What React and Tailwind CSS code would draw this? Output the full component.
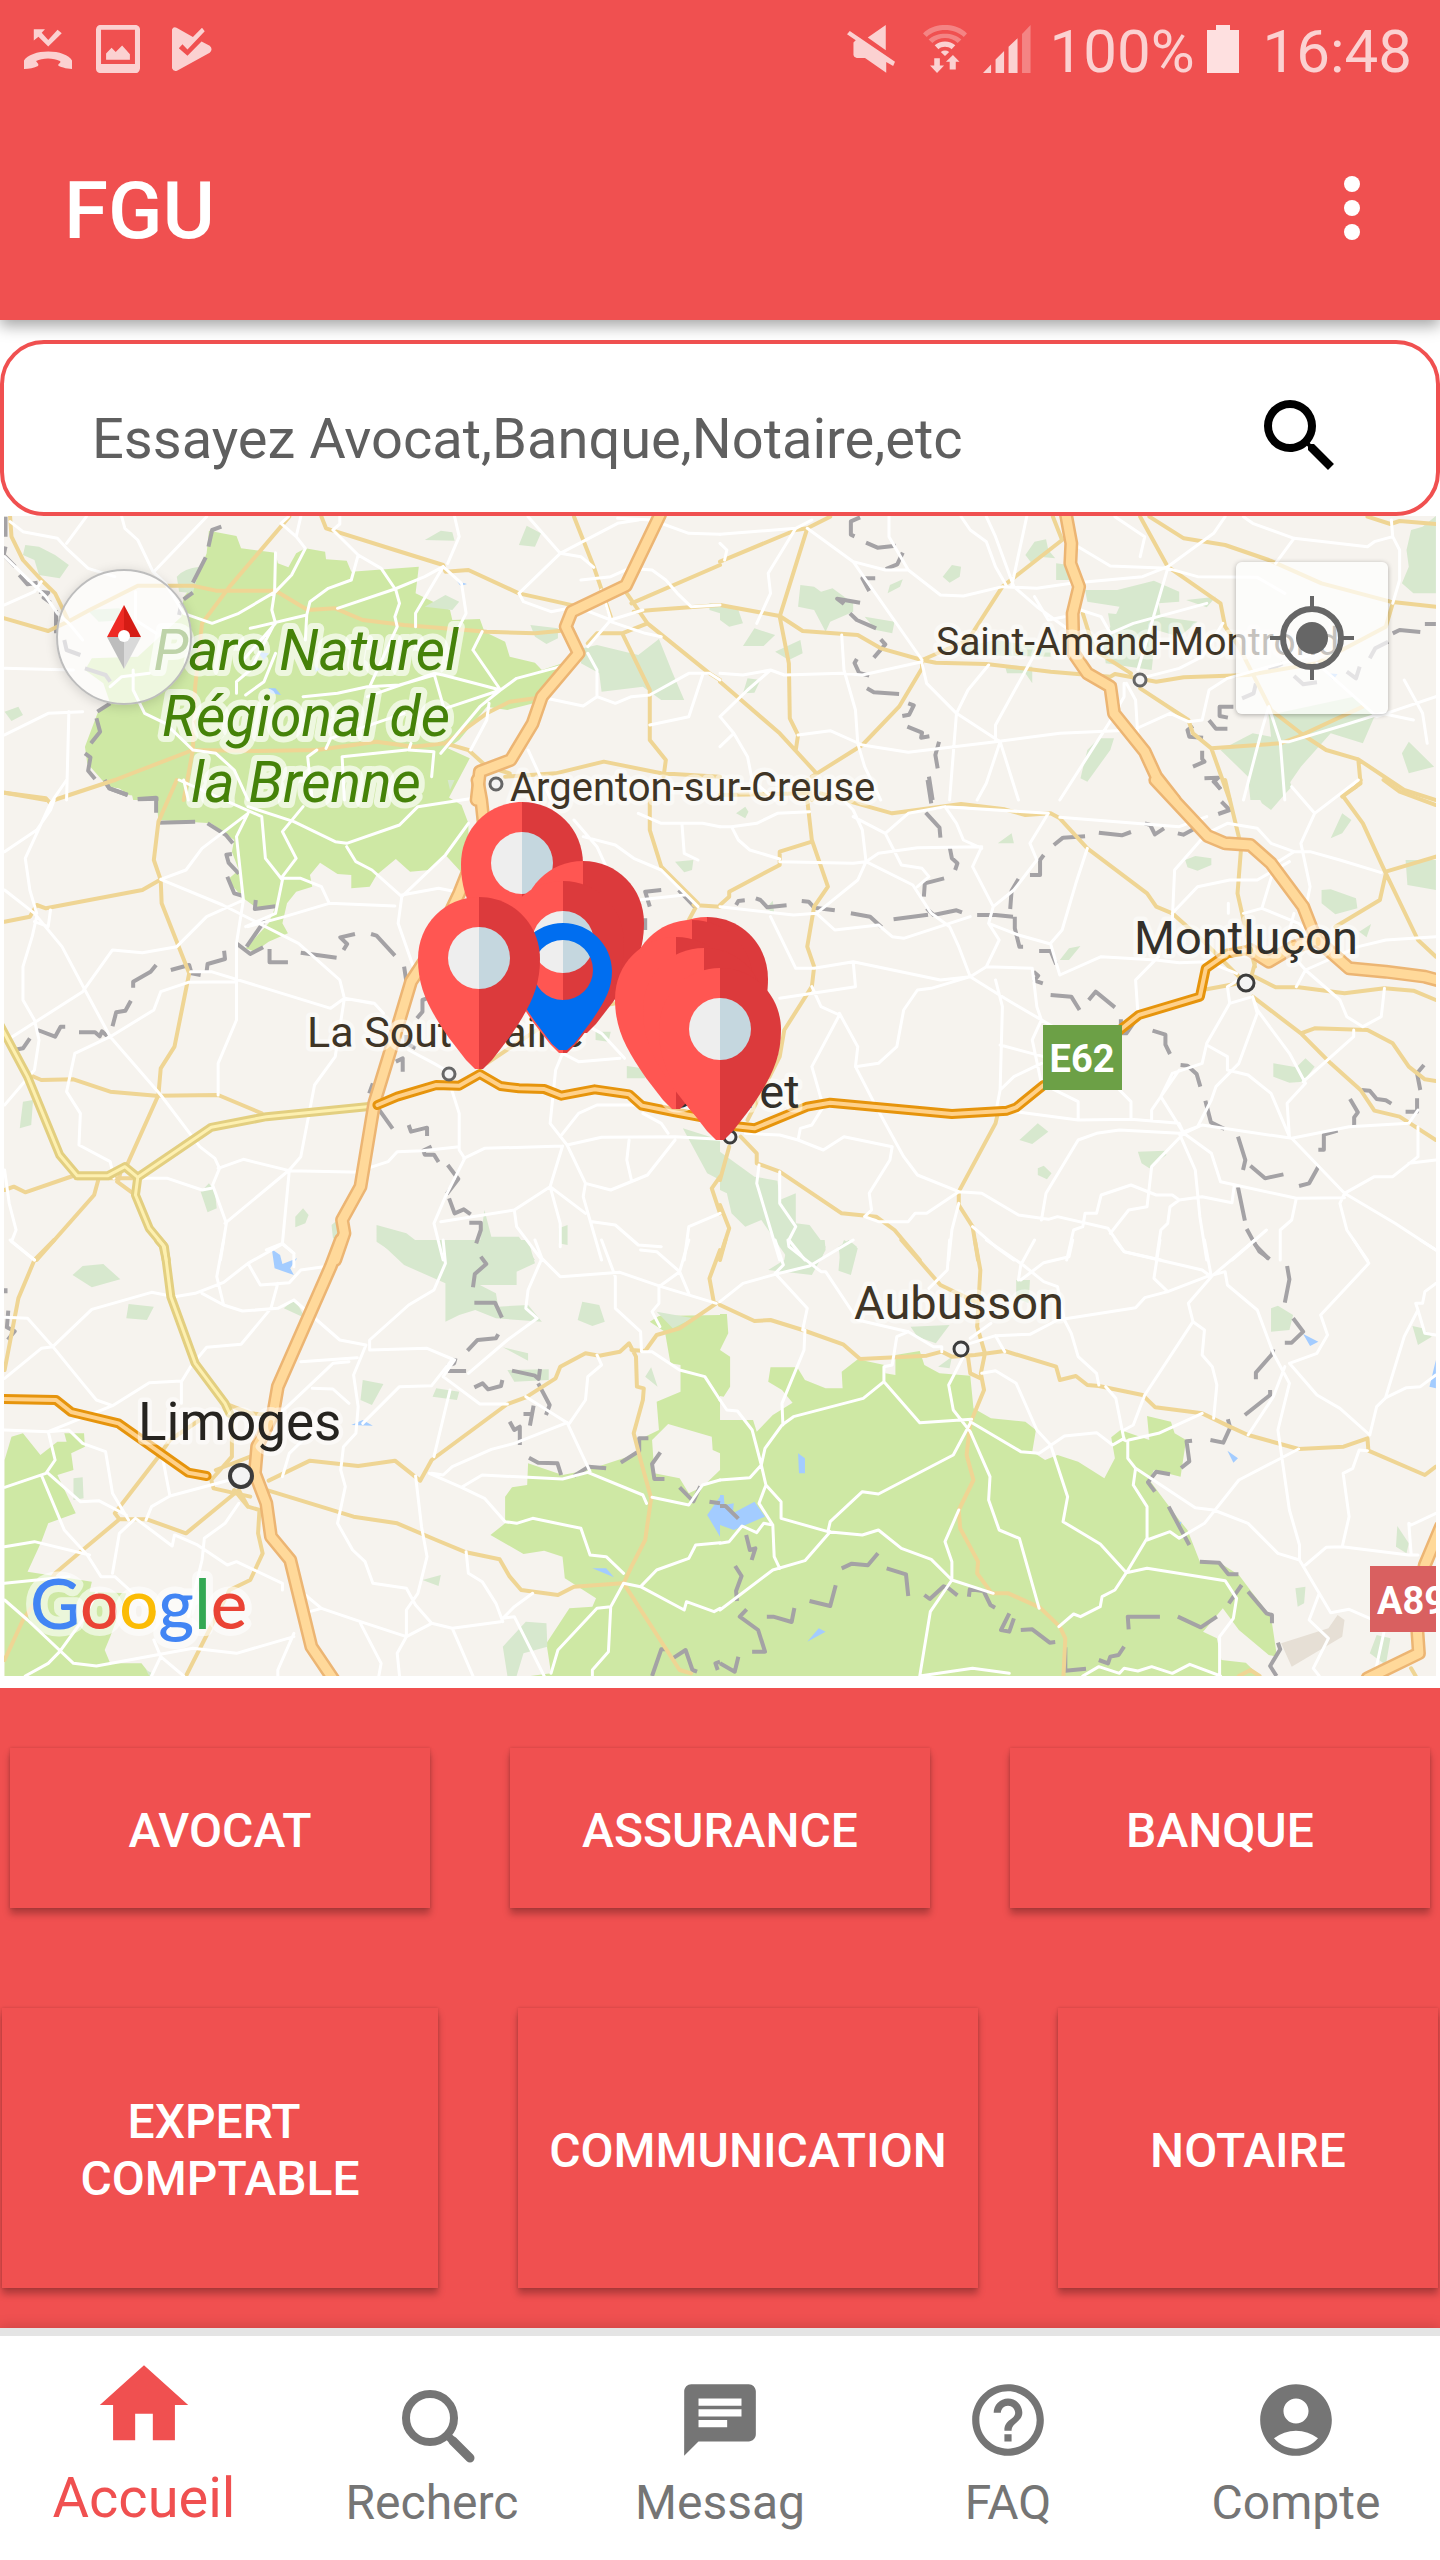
import React from "react";
import { MdHome, MdSearch, MdChat, MdHelpOutline, MdAccountCircle } from "react-icons/md";

/* ---------- Map data: six tiles, each drawn in its own local units ---------- */

const TILES = [
  {
    x: 0,
    y: 320,
    park: "M455 632 515 648 525 685 600 698 605 730 628 742 645 700 665 685 708 695 710 718 755 722 765 755 912 740 905 820 980 870 985 900 1045 897 1055 935 1100 965 1110 1010 1165 1028 1180 1050 1225 1030 1190 1140 1105 1170 1060 1160 1000 1260 975 1285 1023 1315 975 1440 290 1440 285 1410 235 1400 190 1330 185 1280 215 1170 240 1150 225 1090 185 1050 200 1015 300 1010 395 890 400 830 425 790 450 700Z",
    wood: "M55 675l30 5 35 25 30 30-20 40-45-10-10-45-25-15ZM925 660l35-28 25 5 5 25ZM1130 675 1147 617 1178 640 1165 680ZM925 860 970 825 1000 845 985 870ZM385 770Q400 745 435 740L420 820 390 815ZM1155 915 1215 925 1215 955 1190 972 1165 950ZM1270 985 1300 975 1390 1005 1435 957 1465 1060 1490 1140 1440 1140 1400 1100 1310 1115 1305 1060 1265 1030ZM10 1175 40 1160 50 1185 25 1203ZM1545 850 1568 855 1568 880 1545 870ZM190 870 260 865 275 900 215 905Z",
    water: "M995 783 1017 792 1003 798ZM560 995 585 1000 575 1020ZM685 1035 697 1048 687 1055ZM585 1105 600 1105 612 1125 590 1120Z",
    white: "M22 605 50 635 125 655 145 685 192 745 250 770M145 670 188 590M265 590 272 625 300 660 333 755 360 790 400 880 462 910 520 880 600 815 635 765 665 685 645 650 655 590M450 590 335 755M10 710 100 830 125 880 150 910 180 960M10 855 75 815 90 785M295 815 295 900 340 940M600 698 598 815 592 870 600 910 530 1020M645 650 612 610 628 590M740 590 740 612 725 630 780 705 830 745 862 810 870 850 860 890 865 920 805 1100M780 705 765 780 715 805 675 845 668 885 545 925M735 865 860 807 925 770 965 740M668 885 665 960M965 740 1005 790 1015 880 1000 920M965 740 905 880 905 920M990 590 1000 650 975 730M1150 590 1220 700 1265 710 1293 742M1220 700 1345 610 1390 600M1220 700 1130 820 1140 845 1200 875 1255 860M1345 595 1420 600 1500 640 1568 643M1265 780 1330 770 1370 745 1420 750 1450 780 1475 820 1505 860 1568 855M1255 860 1330 900 1400 870M1330 900 1280 980M1330 905 1405 940 1440 950M1330 900 1310 810M1030 990 1050 935M1030 990 1090 1110 1045 1160 960 1300M1090 1110 1125 1075 1220 1040M1090 1110 965 1065 945 1060 800 1130M945 1060 970 1180M970 1165 1090 1110M10 1045 160 1050M10 1245 105 1180 180 1175M150 1175 145 1440M290 1050 290 1110 315 1180 360 1210 420 1290M240 1100 265 1070 325 1060M515 1120 515 1085 545 1050 600 905M535 1125 575 1085 600 1000M660 1130 735 1120 800 1100 870 1095 945 1065M420 1290 470 1300 510 1350 540 1440M890 1290 945 1295 940 1370M890 1290 895 1270M1025 1290 1060 1200 1065 1150M400 1380 410 1440M710 1285 720 1255 880 1180M1280 1000 1300 1050 1300 1130 1340 1150 1375 1130 1415 1125M1190 1135 1270 1158 1300 1130M1415 1125 1500 1060 1545 1060 1568 1080M1530 1065 1500 1190 1415 1215M1150 1290 1200 1440M680 1440 670 1310 690 1290M750 1440 745 1310 885 1290",
    yellow: "M22 590 25 650 50 720 90 780 120 820 150 905M10 895 105 933 148 905 195 870 300 797 420 797 470 812 600 812 670 870 730 865 790 900 880 915 1060 935 1165 940 1240 930M630 590 500 800 440 910 425 1100 420 1290 400 1440M700 590 710 625 860 690 965 735 970 755 1020 750 1130 820 1260 860M1250 590 1293 740 1330 890M1365 820 1410 910 1545 1060 1568 1080M1375 850 1568 735M1380 875 1420 870 1568 855M1280 970 1300 940 1355 940 1410 910M1355 940 1415 1110 1415 1260 1450 1320 1445 1370M10 1418 100 1440M250 1380 420 1290 560 1293 690 1290 820 1265 900 1280 970 1270 1060 1180 1110 1145 1165 1135M970 1270 1020 1290 1060 1340 1110 1360M1100 1370 1210 1360 1315 1325 1440 1360 1568 1370",
    border: "M12 590V650M12 680l-4 25 25 35M42 765l18 28 22-5M85 815l20 3-10 15 15 15M122 870v70M482 620l-20 10-8 50M448 712 420 788M420 818l-20 20M395 850l-5 35M140 960l5 30 30 15M185 1045l45 20 10 20M240 1150l-28 25M210 1195l8 40-20 35M185 1300l12 12-5 40 15 25M228 1385l10 20 40 20M300 1438l45-2",
    motorway: "M1437 585 1363 797 1245 875 1232 920 1260 1000 1180 1130 1160 1210 1112 1320 1045 1355 1038 1440",
  },
  {
    x: 720,
    y: 320,
    wood: "M665 705 685 665 710 658 715 690 730 715 695 710 680 732ZM485 770 505 735 525 740 522 770 500 788ZM732 730 760 735 760 780 732 780ZM795 810 865 810 945 782 1000 815 1000 845 955 850 960 890 1040 905 1000 950 950 930 940 1050 840 1030 835 980 850 920 870 860 800 845ZM845 880 885 885 885 925 850 920ZM1015 840 1080 830 1060 862ZM175 795 205 800 220 815 245 805 290 850 290 875 240 905 230 935 205 870 170 860ZM365 820 370 795 398 778 392 800ZM315 890 380 905 375 940 340 930ZM75 925 120 945 95 978 50 978ZM120 995 175 960 180 1000 150 1020ZM0 858 40 870 50 910 20 920 0 900ZM50 1120 60 1075 88 1080 75 1118ZM520 985 600 960 720 985 720 1010 520 1005ZM620 1035 680 1040 680 1090 665 1060 625 1060ZM1505 630 1530 620 1559 588 1559 820 1510 820 1485 790 1500 740 1495 690ZM1195 1185 1380 1130 1425 1190 1400 1270 1330 1240 1265 1340 1215 1440 1155 1440 1150 1370 1090 1290 1160 1240 1200 1250ZM800 1290 825 1255 858 1255 850 1290 800 1385 785 1375ZM1485 1300 1500 1265 1555 1340 1500 1360Z",
    water: "M1320 1060 1345 1062 1335 1080Z",
    white: "M0 643 165 625 200 600M10 720 15 690 0 670M165 625 105 760 110 820 80 910M190 625 290 725 360 750 410 750 480 825 530 828 615 800M290 725 440 1020M368 590 368 650 410 750M525 590 545 630 580 665 600 740 625 800M580 590 600 650 640 800M668 590 635 800M615 800 690 805 765 790 920 770 975 740 1075 640 1100 590M780 680 850 738 975 745M975 745 910 1050M860 590 925 650 915 710M975 745 1040 770 1170 772 1230 820M1140 590 1160 610 1250 655 1410 680 1425 665 1465 650 1462 600M1250 655 1210 730M1465 650 1480 690 1480 780 1465 850M685 830 715 900 750 890M640 800 690 860 770 940M785 870 830 890 850 940 900 910 1060 850M0 1060 50 1065 110 1050 140 1065 265 1060 310 1065 440 1025M265 945 270 1050 295 1170 300 1270 315 1340 350 1440M0 1190 60 1110 110 1050M0 1190 30 1240 0 1280M30 1240 60 1310 70 1380 120 1440M170 1245 240 1232 310 1275 410 1297 600 1265 740 1240 900 1230 980 1180 1020 1205 1050 1200M440 1030 450 1090 515 1180 610 1265 650 1440M515 1180 540 1110 585 1035M515 1180 500 1440M600 1265 600 1215 690 990M610 1265 580 1390 560 1440M885 1090 905 1140 910 1250M740 1440 870 1160M880 1090 880 1130 855 1190M1050 1200 1065 1110 1105 1075 1300 1000M915 1075 1000 1045 1050 1010 1095 910M1195 1160 1180 1230 1140 1440M1195 1160 1220 1265 1230 1440M1220 1265 1240 1265 1360 1215 1440 1180 1510 1200M1300 1030 1430 1190 1559 1130M1490 1080 1530 1180 1540 1270",
    yellow: "M0 725 165 630 190 625 240 590M190 625 130 890 150 1030 152 1195 170 1245 165 1290M0 855 130 888 180 933 300 945 350 985 440 1020 470 1028 580 1032 720 1055 850 1070 860 1062 950 1085 1010 1072 1150 1065 1300 1030 1450 920 1465 850M725 590 745 660 615 800 540 960 440 1020 440 1045 390 1160 310 1275 200 1370M0 1085 130 1240 210 1360M790 880 815 990 895 1060M915 1105 1020 1200 1030 1240 1070 1285 1110 1440M1070 1285 1220 1270 1260 1250 1290 1230 1400 1160M915 590 975 740 1090 850 1100 920 1130 980 1200 1170 1270 1245 1320 1290 1390 1318 1395 1390 1355 1430M1390 1318 1490 1410 1559 1440M935 590 1010 655 1100 675 1195 720 1310 790 1460 845 1559 860M1410 590 1460 612 1480 603 1559 612",
    border: "M305 592l-20 12 0 40 8 5M318 668l25 15 40-6M398 698l-12 35-25 14M338 775h-28l15 38M305 848l-50-12 15 16M283 880l15 20 42 25M350 958l10 15-25 40M298 1017l-5 12 10 30 22 8M320 1105l15 12 55 5M410 1150l12 6-10 28-15 4M408 1220l32 18-2 15 18-4M477 1265l-8 40 5 40M455 1370l8 70M1137 1135l25-15 5-30M1118 1160h-30v28l18 5M1105 1226l-25 0-15-25M1030 1218l-12 12 4 20 30 3M1050 1292v25l5 8-25 15M1055 1375l30-2-10 12 15 22M1465 940l15-10 45 6M1535 912h24M1455 965l-28 20-12 30M1250 1068l20 25 30-6M1365 1055l20 20 8-35M1195 1050l30-20",
    motorway: "M754 588 765 670 763 730 782 800 768 880 770 1000 800 1060 850 1100 858 1180 925 1295 950 1370 990 1440",
  },
  {
    x: 0,
    y: 780,
    park: "M235 0 975 0 975 50 1005 75 1020 130 1020 300 970 225 935 270 893 275 862 237 820 285 805 320 765 325 765 285 735 282 697 248 675 285 680 320 645 335 625 370 615 430 627 460 585 485 555 515 535 505 585 430 600 380 560 385 530 355 495 300 520 270 505 215 510 180 460 130 345 120 340 55 280 45Z",
    wood: "M50 965 72 960 68 1035 43 1045ZM437 1235 455 1210 468 1235 472 1285 452 1297ZM643 1310 660 1285 672 1305 665 1330 643 1342ZM820 1335 885 1360 960 1440 880 1440 820 1385ZM965 1380 1045 1388 1055 1290 1070 1370 1130 1370 1165 1440 985 1440ZM1217 1345 1236 1335 1236 1395 1217 1390ZM1297 755 1330 755 1325 785 1297 780ZM1365 858 1400 865 1405 895 1365 895ZM1487 1045 1568 1080 1568 1200 1540 1180ZM1470 245 1510 240 1507 270 1490 277ZM722 1335 735 1320 740 1380 725 1375ZM975 0 990 0 980 30Z",
    white: "M10 215 80 150 110 90 118 60M145 0 110 70 55 235 65 330 80 400M10 330 75 400 135 500 185 630 240 770 350 945 435 1100 468 1135 478 1165 463 1215 493 1330 480 1440M80 410 70 470 50 560 50 660 75 720 85 780 75 870 10 975M110 390 105 440 75 425M10 785 180 635 245 510 310 518 385 500 450 410 530 360M350 298 485 375 650 490 740 600 750 655 815 670 835 700M350 298 405 270 440 205 540 100M390 0 570 110 578 235 615 300 600 400 535 440M540 100 515 170 530 360 515 490 515 720 475 850 475 945M540 80 640 125 730 185 755 190 870 135 910 80 1030 55M660 80 615 155 645 235 612 295 655 295 700 320 717 370 860 378M755 200 775 245 810 270 875 350 867 430 900 560M875 345 955 325 1010 340M1020 130 970 225 875 350M540 440 620 410 717 370M415 575 460 575 720 685 750 655 810 670M240 770 335 690 350 635 410 607 515 605M163 820 240 770M163 820 145 935 175 1000 172 1095 240 1145 248 1195M750 655 730 830 685 915 655 1130 630 1170 490 1330M475 1165 530 1138 630 1172 790 1177M630 1172 615 1390M305 1195 365 1195 440 1230 460 1225M10 1170 20 1270 35 1350 25 1385 75 1440M800 1165 845 1145 865 1115 920 1112 1000 1100M890 810 945 850 970 870 1000 1000 1000 1110 1012 1135 970 1250 945 1330 965 1440M1010 1135 1055 1105 1225 1098M1225 820 1210 870 1198 1030 1235 1095 1275 1210 1270 1250 1310 1440M1220 1070 1260 1000 1300 975 1400 975M1235 1095 1310 1072 1470 1070 1568 1078M1275 1210 1330 1230 1410 1185 1470 1080M1225 1098 1198 1220 1120 1290 960 1325M1198 1220 1275 1300M1120 1290 1125 1340 1180 1440M1198 1220 1220 1330 1220 1400M1290 1325 1340 1335 1390 1395 1440 1400M1400 1000 1440 1030 1455 1060M1370 1080 1365 1140 1375 1200M1568 1300 1500 1340 1490 1440M580 1410 615 1390 640 1420M1225 820 1260 845 1350 835M1270 730 1310 760 1360 835M1250 120 1300 200 1320 260M1270 170 1340 195 1380 235 1440 270 1520 380M1390 100 1440 130 1530 130 1568 140M1485 130 1490 220 1520 240M1390 360 1490 345",
    yellow: "M10 38 100 55 110 70 118 60 250 0M385 0 345 125 335 240 350 300 352 370 412 580 380 800 350 865 345 945 275 1160M10 425 65 410 80 375 100 385 310 330 348 300M65 885 90 900 160 898 240 935 340 947 475 945 570 1000M10 1230 30 1220 55 1237 165 1185M215 1195 205 1245 80 1440M255 1205 290 1240M262 1180 258 1200M1415 60 1415 150 1440 260 1520 370 1500 420M1510 375 1568 380M1060 850 1180 740 1230 700 1340 670M1568 1190 1550 1225 1568 1300M165 1195 300 1195",
    trunk: "M0 735 60 890 130 1125 168 1187 235 1187 272 1160 300 1192 460 1042 580 1010 815 978M300 1192 295 1245 325 1345 355 1395 362 1440",
    border: "M228 0l10 25 40 20M300 57l40-4v45M345 128l80-3M452 130l40 35 15 25M505 222l-12 2 5 25 22 32M495 290l15 50 20 8M557 360l-2 27 45-8M577 420l-40 80M515 490l30 32 28-20M587 507v40h40M655 518l78 15M773 462l-32 10 15 20-8 18M808 462l12 5 40 60M880 560l5 45M488 512l2 25-38 15-2 22M340 555l-12 20-38 30v18M372 570l40-15 5 25 20 5M285 662l-12 30-20 5-8 42M82 750l38 20 12-30h10M172 757l35 0 10 12 5-15 12 15M65 775l-15 30-20 5M930 655l-10 5v35l-12 20M885 765l0 25 20 15M862 845l15-10 0 40M812 910l-8 30M825 988l30 58M890 1035l5 20 35-12v25M940 1100l-18 12 3 12 20 0 10 22M975 1155l23 42-25 45M978 1255l12 45 20-12 15 15M1022 1328l25 0 0 22-10 40M1440 330l-35 5 10 45M1478 330l38 55M1405 415v35",
    motorway: "M1040 0 1048 60 1055 150 1000 340 945 500 895 605 855 790 815 970 785 1220 745 1320 750 1360 730 1440",
    orange: "M822 975 865 950 950 915 1000 917 1045 882 1090 918 1130 925 1185 927 1222 947 1295 928 1370 943 1398 977 1470 997 1568 1022",
  },
  {
    x: 720,
    y: 780,
    wood: "M35 100 55 80 62 95 55 115ZM605 190 635 160 640 190ZM1155 0 1240 0 1245 20 1225 50 1200 90 1180 70ZM1330 175 1355 100 1375 120 1355 160ZM1013 240 1035 228 1070 235 1070 255 1040 272 1018 262ZM1493 240 1559 240 1559 330 1497 315ZM1310 330 1330 328 1385 355 1388 385 1340 403 1310 370ZM740 540 760 505 785 498 760 540ZM1392 455 1418 432 1408 472ZM1205 850 1255 862 1275 835 1295 860 1270 905 1240 908 1205 890ZM652 1080 692 1030 715 1055 680 1092ZM910 1115 970 1112 972 1125 935 1165 918 1150ZM692 1165 705 1157 722 1180 712 1198 692 1185ZM0 1115 75 1190 125 1202 130 1260 165 1240 165 1330 195 1335 230 1400 220 1440 150 1440 130 1400 90 1320 55 1340 25 1300 15 1240 0 1230ZM258 1400 280 1380 298 1400 292 1440 262 1440ZM100 385 115 362 118 400Z",
    white: "M0 140 25 140 40 180 65 210 130 237M25 140 80 130 125 100 195 95M240 20 290 90 310 150 318 245M290 110 360 160 410 100 490 80 715 100M360 160 395 255 440 265 455 290 430 320M318 245 345 220 430 203 570 200 550 260 595 380 585 430 608 480 580 560 545 590M130 245 290 250 318 245 420 315 460 400 500 440 520 500 545 590M318 245 300 300 210 400 160 405 0 380M490 80 515 130 530 180 570 205M715 100 675 190 690 240 640 330 595 380M740 112 1000 140 1060 110M800 205 775 310 745 450 720 490M585 430 650 465 720 492 740 585M545 590 620 655 725 740M210 400 250 450 345 435 375 470 400 475 545 410M110 410 165 565 205 565 290 545 480 600 545 590M545 590 460 625 430 630 400 690 385 800 345 850 295 860M290 545 295 620 130 655M260 700 300 800 295 860 340 980 400 1130 430 1185 520 1235 570 1240 650 1305 715 1318 735 1310 845 1345 880 1415 960 1440M200 620 220 680 260 705 200 860 225 980M600 600 615 680 610 930 600 1000M610 795 705 830M580 560 680 565 690 680 700 720 680 780 700 910M740 585 830 530 950 540 1000 548 1060 545 1125 580M985 420 990 270 1060 160 1105 130 1170 145 1200 190 1250 215 1285 215 1350 240 1440 278M985 400 1040 320 1110 300 1170 300 1240 245M1245 20 1295 100 1265 190 1285 320 1275 390M1295 100 1390 0M1140 400 1180 385 1210 250 1250 215M1180 385 1260 430 1300 480M1107 370 1107 400M1275 570 1390 500 1450 480 1559 470M1275 570 1230 500 1250 400M1255 620 1275 570 1350 660 1365 710 1400 740 1440 710 1447 625M1140 590 1105 620 1110 670 1060 790M1060 795 1105 830 1105 870 1150 885 1200 940 1240 1070M1160 650 1110 670 1060 790 1050 850 985 880 960 950 1010 1060M1160 650 1170 690 1240 820 1275 910 1235 970 1240 1070M1160 650 1170 700 1130 850 1080 920 1070 960 1040 1040 1000 1060M910 700 905 600 955 530M1380 750 1380 770 1270 905M645 995 780 1020 895 1018 1000 1030 1010 1060 1050 1035 1245 1075 1370 1040 1500 1030 1520 990M610 930 640 890 700 850M700 910 780 965 780 1020M870 930 895 965 895 1018M940 1020 940 990 1000 870M1010 1060 940 1160 930 1280 890 1290 850 1360M1000 1060 870 1050 820 1060 780 1080 710 1240 700 1320M1000 1060 1035 1170 1045 1310 1060 1440M1010 1060 1070 1120 1090 1205 1255 1255 1360 1253M1245 1075 1360 1240 1425 1190 1465 1190 1520 1130 1520 1040M1500 1150 1559 1140M1360 1240 1350 1270 1365 1350 1410 1440M1360 1240 1470 1330 1559 1410M1255 1255 1245 1320 1220 1350 1220 1440M1050 1250 1115 1268 1120 1215M1115 1440 1190 1350M55 1060 130 1065 170 1080 225 1110 270 1070 375 1100 370 1140 325 1240 330 1290 315 1310 345 1325 410 1325 425 1300 450 1300 520 1235M170 1080 175 1045 200 1035 225 980M520 1270 505 1350 498 1440M550 1340 600 1400 640 1440M85 1155 80 1210 130 1440M130 1175 130 1270 165 1340 150 1380 185 1440M790 1340 770 1350 755 1440M790 1340 795 1300 820 1300 830 1245 895 1215 950 1245 985 1245 1000 1260 1050 1250M1000 1260 980 1280 975 1330 960 1350 950 1440",
    yellow: "M190 60 200 180 235 320 205 380 190 500 205 560 200 620 140 750 130 830 60 1020M0 375 20 350 20 335 130 255 130 215 200 185M0 45 190 40M190 0 200 60M220 40 375 100 525 72 620 88 665 105 720 100 740 115 800 205 930 340 950 380 985 400 1050 480 1130 590M1100 0 1135 200 1127 340 1145 450 1165 560M1445 0 1480 35 1559 75M1395 0 1385 20 1355 45 1400 130 1450 280 1520 480 1559 530M1450 275 1559 230M1450 280 1437 360 1340 440M1165 590 1210 622 1260 622 1360 640 1447 625 1510 632 1559 660M1060 628 1130 610M1160 650 1265 760 1330 850 1395 930 1425 992 1480 1010 1559 1080M1265 760 1295 745 1410 750 1465 790 1500 860 1535 898 1559 903M605 1000 600 1030 520 1235 520 1275 550 1340 562 1440M45 1070 80 1120 80 1150 130 1175 265 1300 340 1310 380 1350 435 1440M20 1100 0 1200M0 1275 20 1345 0 1430M1165 550 1155 600",
    border: "M35 375l5-12 14-2M78 355l10 5 15 22 42-6M178 363l15 2 12 18 45 8M285 400l42 10 25 32M378 418l75-14M450 385l15 20 50-14 12 6M452 0l8 70M448 98l30 45 2 30M500 200l5 35 12 15-5 20M488 295l-42 15-2 40M560 405h40l38 5M642 410v35l10 55 8 0M650 297l-15 35-3 55M705 225l-8 15v45h-22M727 195l20-22 48-4M825 158l50 8 20-10M925 130l12 5 10 28 20-18M997 160l12 4 30-22M1075 0l15 28M1092 65l18 25-25 12M695 513h25l12 40M683 575l10 12-8 15 18 8M720 645l45 5 18 40M803 660l15-25 42 47M873 718v42l12 0 20-40M942 752l28 12 0 30 10 28M1003 855l15 2 20 25 8 38M1057 962l12 65 30 20M1128 1070l16 70-5 30M1155 1157l32 38 40-12M1303 1160l-20 50-22 8M1128 1222l15 100M1147 1347l20 50 28 40M1372 957l17 40-8 15 0 30M1345 1052l-30 12v45h-12M1397 930l18 2 15 25 20 4 12 10M1533 855l-15 25 7 50M1518 955v40h-25",
    motorway: "M948 0 1062 168 1100 190 1155 195 1200 250 1270 380 1290 450 1300 480 1370 565 1450 575 1535 590 1575 605M1300 480 1250 500 1195 545 1155 510",
    orange: "M0 1022 30 1038 75 1045 190 980 240 968 505 1002 625 992 645 982 705 915M860 762 912 705 1045 650 1058 565 1105 520 1150 510",
  },
  {
    x: 0,
    y: 1240,
    park: "M25 590 50 580 88 645 125 605 145 605 140 580 183 580 185 620 155 640 160 690 125 705 165 820 105 850 90 905 60 995 200 1025 195 1055 275 1060 240 1190 228 1230 240 1270 308 1270 330 1308 10 1308V660ZM1150 670 1225 705 1280 690 1390 640 1390 600 1435 570 1430 485 1482 455 1482 375 1460 370 1448 275 1415 245 1435 228 1568 225 1568 1308 1155 1308 1200 1300 1190 1210 1240 1105 1290 1100 1298 1075 1230 1015 1225 950 1185 932 1140 942 1068 885 1100 850 1100 770 1115 742 1148 735Z",
    land: "M1420 600 1455 552 1550 590 1552 630 1568 640 1568 690 1530 740 1500 760 1480 715 1425 700Z",
    wood: "M158 105 180 78 225 72 262 118 200 142ZM280 192 335 200 320 240 275 235ZM618 205 642 178 665 235ZM822 0 1150 0 1165 70 1125 95 1125 135 1045 135 1080 160 1085 200 1150 195 1180 245 1080 235 1035 210 1000 225 970 245 970 130 880 75ZM1258 240 1268 185 1305 195 1317 245 1290 258ZM790 420 835 432 810 495 785 480ZM942 470 950 445 1000 455 995 480ZM1105 390 1195 388 1195 420 1120 425ZM1095 322 1150 340 1150 362ZM1405 410 1418 382 1432 440ZM1430 215 1510 235 1465 265ZM160 715 180 712 182 775 160 780ZM920 1020 960 1005 955 1038ZM1095 1220 1145 1145 1190 1150 1192 1220 1140 1240 1125 1308 1105 1308ZM318 1290 332 1300 325 1308Z",
    water: "M592 28 610 45 615 72 647 55 632 85 640 105 598 85ZM765 555 790 540 812 557ZM1290 985 1320 985 1337 1012ZM1568 770 1540 825 1568 890Z",
    white: "M22 0 75 60M10 232 60 235 115 320 180 430 210 480 245 497M10 415 90 325 115 320 200 208 330 157 380 170 425 160 487 127 540 70 615 12M440 160 487 195 528 213 605 205 640 180M487 0 472 110 487 195M540 70 567 135 630 128 655 90 705 80M615 12 640 40 640 80M605 130 590 205 525 313 450 322 415 380 395 425 395 490M245 497 325 428 395 423M10 570 105 575 150 570 180 610 230 635 245 760 280 840M245 497 105 575 120 660 100 700 10 742M90 705 140 870 190 945 220 1010 250 1010 330 1110M105 700 175 785 215 782 275 825M10 920 75 905 195 945M10 1030 150 1010M10 1080 60 1140 160 1270 210 1278 420 1225 515 1240 640 1190M355 660 370 768 500 720M370 768 330 800 318 840M295 835 260 880 245 1000M295 835 375 918 380 885 430 915 495 975 515 965 615 1030 615 1050M520 790 490 850 445 895 440 960 410 1130M130 1235 180 1140 210 1060M350 1250 335 1200M350 1250 400 1308M350 1250 330 1308M55 1308 105 1270 130 1235M640 180 740 300 797 315 770 405 780 500 775 580 748 620 742 690 752 740 735 850 768 930 795 965 812 1030 885 1045 905 1095 940 1150 985 1165 1090 1145M805 330 930 325 990 360 965 410M805 330 805 300 890 195 945 150 970 70 965 0M655 365 778 353M760 365 725 370 610 520M680 445 725 447 760 490M790 550 870 440 940 437 985 358M965 410 1045 492 1105 492M980 450 945 650M1145 470 1235 548 1285 695M1235 548 1120 610 1070 628 985 680 965 705 940 700M935 700 1005 742 1050 705 1225 717 1280 697 1400 765 1408 790M905 708 918 860 930 950 910 1060 885 1110 885 1190M1005 742 1055 775 1100 845 1125 850 1160 835 1265 865 1285 945 1320 950 1358 1000M1165 0 1180 55 1150 150 1145 205 1170 235 1105 300 1020 400M1180 55 1220 110 1350 97 1440 140 1560 190M1310 0 1340 110 1340 205 1395 275 1397 335 1420 335 1480 390 1535 410 1568 480M1300 345 1310 375 1280 410 1275 480 1240 550M1480 95 1435 140 1435 190 1420 215 1437 260M1395 30 1430 35 1480 95M1500 0 1480 95 1500 160M1420 772 1500 795 1530 735 1568 720M1358 1030 1395 1040 1490 1110 1495 1085 1555 1115 1568 1105M1395 1040 1430 990 1500 955 1515 915 1568 908M1358 1030 1330 1100 1325 1235 1290 1290 1290 1308M1330 1100 1300 1105 1215 1230 1200 1300M1015 935 1020 1000 1050 1025 1080 1090 1095 1145M1095 1135 1120 1130 1185 1308M1095 1135 1120 1100 1160 1060M985 1165 1030 1308M785 1150 830 1270 825 1308M640 1180 605 1290 605 1308M665 1065 700 1105 785 1145 885 1190 940 1150M885 1190 865 1240 870 1308M660 1120 700 1105M615 710 630 640 660 600",
    yellow: "M118 0 75 60 40 175 10 390M435 540 370 600 345 650 250 820 260 838 320 838 405 880 520 750 540 800 565 810M260 838 180 930 120 1000 50 1140 10 1260M505 520 505 650 460 720 465 745 545 770M490 490 545 520 590 525M585 722 675 662 780 678 860 662 915 722 940 660 1105 492 1145 472 1210 415 1220 380 1275 340 1305 347 1350 335 1370 310 1385 350 1387 440 1402 445 1400 480 1380 580 1395 660 1418 775 1405 900 1375 980 1358 1030 1480 1290 1505 1300M585 752 770 830 865 850 950 900 1015 937 1088 958 1110 1010 1135 1050 1215 1065 1250 1040 1355 1030M565 810 562 880 572 940 545 1020 500 1050 405 1308M1375 330 1405 333 1430 285 1480 265 1560 190M1555 190 1545 115 1568 30M510 750 540 800M470 690 545 650",
    trunk: "M345 0 358 20 372 170 425 370 490 490 500 520",
    border: "M12 145v15M18 212l-3 50 17 12-15 25M1047 50l12 22-25 30-4 40M1033 188h45l15 45M1085 283l-5 12-40 5-22 32M992 355l-3 15-15 8M975 393h40M1033 442l18-12 12 18 28-10 3-18M1115 392l50 15 8 10 3-30M1172 430l25 65-8 30M1162 497l-8 60M1140 522h18M1110 545l10 25 12-10v55M1152 653l20 15 42 2 8 35M1250 708l32-28 38 5M1352 668l40-35v-38h20M1438 637l-18 35 5 45h22M1480 742l30 42 15-45M1545 785l23 5M1420 1308l20-80 10 0M1465 1255l28-25 15 60 10 5M1568 1265l-10 5 5 20",
    motorway: "M742 0 720 80 605 440 595 520 560 620 555 700 580 790 590 890 632 960 678 1220 726 1318",
    orange: "M-5 477 122 480 155 516 258 550 410 698 450 708",
  },
  {
    x: 720,
    y: 1240,
    park: "M0 222 15 222 18 280 0 330 22 350 22 440 8 470 0 468ZM0 540 72 540 80 575 115 525 158 488 135 450 105 425 110 382 168 382 185 420 230 445 267 445 265 395 300 358 358 375 360 400 382 405 382 345 435 333 445 375 478 400 545 407 552 505 590 535 665 545 688 570 680 635 708 660 735 645 780 665 837 715 860 655 852 592 872 570 935 600 930 528 982 545 990 580 1015 600 1003 710 945 690 935 720 1000 840 1018 870 1045 965 1090 970 1130 1005 1160 1060 1200 1130 1213 1250 1195 1245 1130 1170 1095 1105 1052 1175 1082 1195 1092 1260 1145 1268 1175 1308 0 1308Z",
    wood: "M148 0 228 0 230 30 200 105 105 90 140 60ZM262 30 270 0 300 25 285 105 258 92ZM645 120 675 120 672 190 645 175ZM415 260 500 255 470 310 430 290ZM1200 205 1215 197 1248 225 1240 270 1200 275ZM475 380 505 350 500 385ZM1508 258 1530 265 1550 290 1520 315ZM1475 858 1500 910 1495 940 1472 920ZM1253 1045 1275 1040 1272 1090 1258 1100ZM1430 1185 1460 1195 1450 1275 1415 1240Z",
    field: "M1222 1210 1325 1165 1345 1125 1360 1140 1355 1190 1245 1280Z",
    water: "M170 640 185 655 185 700 172 700ZM0 765 8 765 10 795 30 790 28 820 75 785 98 830 30 870 0 855ZM190 1205 215 1165 230 1175ZM1105 632 1128 655 1118 668ZM1270 282 1303 305 1285 318ZM1559 360 1545 440 1559 445ZM992 850 1005 845 1000 870Z",
    white: "M120 0 138 75 120 100 190 205 180 270M148 0 150 20 220 95 230 95 300 240 410 275M0 185 50 130 120 103 195 78 290 0M500 0 495 90 455 145M580 0 660 75 705 125 735 140 750 240M685 0 655 75 650 120M768 0 760 50 705 68 655 120M410 275 465 320 483 320 483 335M410 275 385 290 375 375 357 380 357 425 435 548 548 538M357 425 312 475 160 530 135 555 98 625 90 675 100 735M185 270 183 330 150 440 135 490 137 555M0 480 15 510 38 513 70 570 90 675 65 713 0 720M100 735 85 790 115 855 118 950 130 985M100 735 133 785 133 835 235 875 310 885 345 870 395 925 460 958 505 1020 595 1060M235 875 240 845 310 755 345 762 508 645 545 550M0 910 20 905 48 858 80 878 95 850 115 855M0 1110 115 990 185 962 240 875M530 350 498 435 508 510 545 575 588 710 585 780 608 870 652 895 695 1105M545 545 655 635 695 640 750 588 820 578 855 615 880 595M720 615 757 770 747 845 828 912 885 998 930 985 1100 1022 1125 1075 1118 1135 1088 1190 1088 1308M570 400 600 392 645 430 690 570 720 615M520 810 490 905 505 965 505 1020 458 1115 435 1308 550 1285 630 1300M545 310 600 287 675 283 735 240 905 203 925 173 975 155 1060 110 1100 95M545 295 590 250M600 287 620 335M750 240 765 280 780 350 820 400 825 435M840 440 862 475 880 600 888 605 888 655 905 685 900 735 930 800 930 895 885 998 860 1050 832 1070 828 1100 785 1130 770 1122 738 1160M890 600 955 580 1050 520M880 570 900 555 925 465 1030 245 1020 190 1070 110M860 0 880 35 1050 90 1070 110 1055 0M958 0 945 115 975 155M1165 0 1070 110M1100 95 1105 135 1170 210 1205 340 1240 430 1215 570 1240 810 1262 915 1262 960M1380 0 1413 70 1308 225 1323 285 1300 340 1240 370 1300 465 1350 505 1415 585M1030 245 1055 270 1050 345 1072 380 1082 435 1075 535M1230 380 1205 470 1150 585M1260 627 1130 720 1055 850 1000 895 980 875 930 900M905 685 1035 803 1075 810 1150 850 1215 940 1262 960 1330 1118 1370 1108 1415 1135M1410 632 1392 630 1378 685 1357 700 1370 830 1355 920 1320 922 1275 975M1355 920 1500 945 1520 945M1559 820 1505 855 1500 850 1505 940M1559 405 1525 440 1495 443 1450 473 1430 500 1415 585M1450 470 1490 290 1520 210 1535 280 1559 285M1525 0 1559 30M1559 130 1535 155 1530 190 1515 190 1520 210M1305 1060 1283 1140 1325 1195 1292 1285 1305 1308M790 1308 825 1280 870 1300 880 1285 910 1293 940 1280 985 1300 1023 1273 1090 1308M1450 1150 1425 1308",
    yellow: "M0 60 12 0M0 195 75 243 110 240 180 270 268 313 305 357 450 347 483 335 505 350 555 345 620 333 732 380 740 420 775 408 800 435 825 438 920 465 948 502 1050 520 1110 560 1150 585 1260 627 1358 620 1410 595 1412 632 1535 705 1559 680M395 0 480 135 555 185M555 0 567 90 560 260 577 340 568 400 575 450 545 550 537 645 552 720 520 810 523 865 562 965 560 1000 592 1060 628 1060 697 1103 740 1160 752 1195 748 1308M540 350 545 400 568 415M1130 1308 1155 1290 1175 1308M1505 1285 1515 1308",
    border: "M0 798l12 0 28 38M57 885l8 45 12-5-8 35M33 978l14 30-12 45 2 30M58 1108l-15 22 40 40 15 65-28 0M0 1270l32 25 8-45M102 1130h14l40 16 6-42M195 1083l45 15 12-62M265 985l22-14 35 5 22-36M363 985l42 18 5 65M445 1065l12 12 30-38 10 5 20 22M542 1070l2-22 30 5 15 42 10 8M630 1120l-18 50 18 5 10-40M655 1170l25-2 38 40 12-2M752 1222v70l45-6M825 1260l20 10 5-20 18-5 12-25M890 1168l-2-38h70M997 1130l50 32 35-32M1108 1090l28-55M1150 1055l40 65 12 5v25M1215 1208l5 20-22 50 14 30M1045 965l42 3 20 35h22M977 800l45 115M980 703l-30-8-18 32 15 28M1028 602l-12 2 6 60-18 20M1068 600l28 8 15-45-5-25M1143 525l55-60v-15M1167 418v-20l35-55 3-15M1248 235l22 40-25 33-15 0M1235 78l5 40-10 70M1160 0l15 35 22 22",
    motorway: "M1570 860 1535 975 1515 1100 1522 1240 1410 1315",
  },
];

const FILLS = [
  ["park", "#cee8a4"],
  ["land", "#f6f3ee"],
  ["wood", "#d7e8ce"],
  ["field", "#e6dfd5"],
  ["water", "#a3ccff"],
];

const STROKES = [
  ["border", "#a4a2a5", 4],
  ["yellow", "#efd594", 4],
  ["white", "#ffffff", 3],
  ["trunk", "#e3cf80", 9],
  ["trunk", "#fdf0b0", 3],
  ["motorway", "#ecb573", 14],
  ["motorway", "#ffd99a", 9],
  ["orange", "#e6940c", 10],
  ["orange", "#ffd18a", 4],
];

function TileLayer({ name, fill = "none", stroke, width }) {
  return TILES.filter((t) => t[name]).map((t) => (
    <g key={`${t.x}-${t.y}`} transform={`translate(${t.x} ${t.y}) scale(0.4592 0.33333)`}>
      <path
        d={t[name]}
        fill={fill}
        stroke={stroke}
        strokeWidth={width}
        strokeLinejoin="round"
        strokeLinecap={name === "border" ? "butt" : "round"}
        vectorEffect="non-scaling-stroke"
      />
    </g>
  ));
}

const TOWNS = [
  { name: "Argenton-sur-Creuse", x: 510, y: 801, size: 40, color: "#3f3526", dot: [496, 784, 7] },
  { name: "Saint-Amand-Montrond", x: 936, y: 655, size: 39, color: "#3f3526", dot: [1140, 680, 7] },
  { name: "La Souterraine", x: 307, y: 1047, size: 43, color: "#3f3526", dot: [449, 1074, 7] },
  { name: "Montluçon", x: 1134, y: 954, size: 47, color: "#33302a", dot: [1246, 983, 9] },
  { name: "Guéret", x: 661, y: 1108, size: 47, color: "#33302a", dot: [730, 1137, 7] },
  { name: "Aubusson", x: 854, y: 1319, size: 47, color: "#3f3526", dot: [961, 1349, 8] },
  { name: "Limoges", x: 138, y: 1440, size: 53, color: "#262420", dot: [241, 1476, 12] },
];

const BACK_PINS = [
  { x: 522, y: 802, hole: true },
  { x: 583, y: 861 },
  { x: 563, y: 881, hole: true },
];

const FRONT_PINS = [
  { x: 479, y: 897, hole: true },
  { x: 707, y: 917 },
  { x: 692, y: 920 },
  { x: 676, y: 937 },
  { x: 704, y: 948 },
  { x: 720, y: 968, hole: true },
];

function Pin({ x, y, hole }) {
  return (
    <g transform={`translate(${x} ${y})`}>
      <path d="M0 0C-34 0-61 27-61 62-61 92-50 112-30 141L-13 163-4 172H0Z" fill="#ff5652" />
      <path d="M0 0C34 0 61 27 61 62 61 92 50 112 30 141L13 163 4 172H0Z" fill="#dc3a3c" />
      {hole && (
        <>
          <path d="M0 30A31 31 0 0 0 0 92Z" fill="#eeeeee" />
          <path d="M0 30A31 31 0 0 1 0 92Z" fill="#c5d7df" />
        </>
      )}
    </g>
  );
}

function MapDrawing() {
  return (
    <svg viewBox="4 516 1432 1160" className="block h-auto w-full font-['Roboto',sans-serif]" role="img" aria-label="Carte">
      <rect x="4" y="516" width="1432" height="1160" fill="#f6f3ee" />
      {FILLS.map(([name, fill]) => (
        <TileLayer key={name} name={name} fill={fill} />
      ))}
      {STROKES.map(([name, stroke, width]) => (
        <TileLayer key={name + width} name={name} stroke={stroke} width={width} />
      ))}

      <g fontStyle="italic" fontSize="57" fill="#458209" stroke="#ffffff" strokeOpacity="0.65" strokeWidth="12" strokeLinejoin="round" paintOrder="stroke" textAnchor="middle">
        <text x="306" y="670">Parc Naturel</text>
        <text x="306" y="736">Régional de</text>
        <text x="306" y="802">la Brenne</text>
      </g>

      {TOWNS.map((t) => (
        <g key={t.name}>
          <circle cx={t.dot[0]} cy={t.dot[1]} r={t.dot[2] - 1} fill="#f4f4f4" stroke={t.size > 44 ? "#3c3c3c" : "#666666"} strokeWidth={t.dot[2] > 10 ? 4 : 3} />
          <text x={t.x} y={t.y} fontSize={t.size} fill={t.color} stroke="#ffffff" strokeOpacity="0.5" strokeWidth="9" strokeLinejoin="round" paintOrder="stroke">
            {t.name}
          </text>
        </g>
      ))}

      <rect x="1043" y="1025" width="79" height="65" fill="#6ca046" />
      <text x="1082" y="1072" textAnchor="middle" fontSize="38" fontWeight="700" fill="#ffffff">E62</text>
      <rect x="1370" y="1566" width="79" height="66" fill="#d96060" />
      <text x="1377" y="1614" fontSize="38" fontWeight="700" fill="#ffffff">A89</text>

      {BACK_PINS.map((p) => (
        <Pin key={p.x} {...p} />
      ))}
      <path fillRule="evenodd" fill="#006ef0" d="M563 923C536 923 514 945 514 971 514 990 522 1003 536 1023L552 1044 559 1050H567L574 1044 590 1023C604 1003 612 990 612 971 612 945 590 923 563 923ZM563 940A30 30 0 1 1 563 1000 30 30 0 1 1 563 940Z" />
      {FRONT_PINS.map((p) => (
        <Pin key={p.x} {...p} />
      ))}

      <text x="30" y="1629" fontSize="69" fontFamily="Lato, sans-serif" fontWeight="500" stroke="#ffffff" strokeOpacity="0.6" strokeWidth="14" strokeLinejoin="round" paintOrder="stroke">
        <tspan fill="#4285f4">G</tspan>
        <tspan fill="#ea4335">o</tspan>
        <tspan fill="#fbbc05">o</tspan>
        <tspan fill="#4285f4">g</tspan>
        <tspan fill="#34a853">l</tspan>
        <tspan fill="#ea4335">e</tspan>
      </text>
    </svg>
  );
}

/* ---------- Status bar ---------- */

function StatusBar() {
  return (
    <div className="flex h-24 items-center justify-between pl-6 pr-7 pt-0.5 text-[#fbd1d1]">
      <div className="flex items-center gap-6">
        <svg className="h-10 w-12" viewBox="53 86 103 119" preserveAspectRatio="none" fill="currentColor" aria-hidden="true">
          <path d="M74 87H98L91 97 105 119 125 88 134 99 105 138 84 109 74 120ZM53 205V180C60 163 82 153 105 153S150 163 156 180V205L142 203C136 200 129 198 126 194 127 188 134 186 130 181 117 171 92 171 79 181 81 187 86 190 83 196 75 202 64 204 53 205Z" />
        </svg>
        <svg className="h-12 w-11" viewBox="213 77 96 140" preserveAspectRatio="none" fill="currentColor" aria-hidden="true">
          <path fillRule="evenodd" d="M221 77H301Q309 80 309 90V204Q307 217 301 217H221Q213 215 213 204V90Q214 79 221 77ZM224 91V191H298V91ZM235 178V160L247 143 256 156 270 137 287 162V178Z" />
        </svg>
        <svg className="ml-2 h-11 w-10" viewBox="377 83 88 127" preserveAspectRatio="none" fill="currentColor" aria-hidden="true">
          <path d="M377 90Q380 81 387 85L423 112 443 85 449 95 411 148 400 133 392 144 411 166 442 125 460 137Q468 147 460 157L388 209Q380 212 377 202Z" />
        </svg>
      </div>
      <div className="flex items-center text-[60px] leading-none">
        <svg className="mr-7 h-12 w-12" viewBox="277 75 104 145" preserveAspectRatio="none" fill="currentColor" aria-hidden="true">
          <path d="M361 75V151L322 113ZM283 93 381 186 377 199 362 187V219L316 175H298Q291 172 291 166V128L296 121 277 103Z" />
        </svg>
        <svg className="mr-4 h-12 w-11" viewBox="442 72 94 149" preserveAspectRatio="none" fill="currentColor" aria-hidden="true">
          <path opacity="0.4" d="M442 98C466 63 512 63 536 98L529 109C508 80 470 80 450 109ZM454 117C471 93 507 93 524 117L516 128C502 107 476 107 462 128Z" />
          <path d="M467 135C478 119 500 119 511 135L503 147C495 137 483 137 475 147ZM480 156Q489 147 498 156L489 168ZM466 175H478V198H487L472 221 457 198H466ZM506 165 520 186H512V210H499V186H491Z" />
        </svg>
        <svg className="mr-[18px] h-12 w-12" viewBox="571 73 107 146" preserveAspectRatio="none" fill="currentColor" aria-hidden="true">
          <path d="M571 219 589 193V219ZM599 219V178L618 152V219ZM628 219V139L648 113V219Z" />
          <path opacity="0.4" d="M658 219V100L677 73V219Z" />
        </svg>
        <span className="pt-1.5">100%</span>
        <svg className="ml-3 mr-6 h-12 w-8 text-[#fee0e0]" viewBox="0 0 32 48" fill="currentColor" aria-hidden="true">
          <path d="M9 0H23V5H32V48H0V5H9Z" />
        </svg>
        <span className="pt-1.5">16:48</span>
      </div>
    </div>
  );
}

function NavSearchIcon({ className }) {
  return (
    <svg className={className} viewBox="0 0 86 86" fill="none" stroke="currentColor" aria-hidden="true">
      <circle cx="41" cy="41" r="24" strokeWidth="8" />
      <path d="M58 58 65 65" strokeWidth="8" />
      <path d="M64 64 81 81" strokeWidth="9" strokeLinecap="round" />
    </svg>
  );
}

/* ---------- Category and navigation buttons ---------- */

const CARD =
  "flex items-center justify-center bg-[#f05050] px-4 pt-1 text-center text-[48px] font-medium leading-[57px] text-white uppercase shadow-[0_6px_7px_rgba(0,0,0,0.27),0_0_3px_rgba(0,0,0,0.15)]";

const NAV = [
  { label: "Recherc", icon: NavSearchIcon },
  { label: "Messag", icon: MdChat },
  { label: "FAQ", icon: MdHelpOutline },
  { label: "Compte", icon: MdAccountCircle },
];

export default function App() {
  return (
    <div className="flex min-h-screen flex-col overflow-x-hidden bg-white font-['Roboto',sans-serif]">
      <header className="relative bg-[#f05050] text-white shadow-[0_6px_14px_rgba(0,0,0,0.35)]">
        <StatusBar />
        <div className="flex h-56 items-center justify-between px-16">
          <h1 className="pt-1.5 text-[80px] font-medium leading-none">FGU</h1>
          <button type="button" aria-label="Plus d'options" className="flex w-12 flex-col items-center gap-2">
            <span className="size-4 rounded-full bg-white" />
            <span className="size-4 rounded-full bg-white" />
            <span className="size-4 rounded-full bg-white" />
          </button>
        </div>
      </header>

      <main className="flex-1 pt-5">
        <form className="flex h-44 items-center rounded-[44px] border-4 border-[#f05050] bg-white px-[88px] pt-4" onSubmit={(e) => e.preventDefault()}>
          <input
            type="text"
            aria-label="Rechercher"
            placeholder="Essayez Avocat,Banque,Notaire,etc"
            className="min-w-0 flex-1 bg-transparent pt-1.5 text-[56px] leading-tight outline-none placeholder:text-[#5f5f5f] placeholder:opacity-100"
          />
          <button type="submit" aria-label="Lancer la recherche">
            <MdSearch className="size-24 text-black" />
          </button>
        </form>

        <section className="relative mx-1 mb-3">
          <MapDrawing />
          <button type="button" aria-label="Boussole" className="absolute left-[52px] top-[53px] size-[136px] rounded-full border-2 border-[#bdbdbd] bg-white/65 shadow-[0_2px_12px_rgba(0,0,0,0.15)]">
            <svg viewBox="0 0 34 64" className="mx-auto h-16 w-[34px]" aria-hidden="true">
              <path d="M17 0 0 32H17Z" fill="#ee2a24" />
              <path d="M17 0 34 32H17Z" fill="#d51c15" />
              <path d="M0 32H17V64Z" fill="#bdbdbd" />
              <path d="M34 32H17V64Z" fill="#d9d9d9" />
              <circle cx="17" cy="31" r="6" fill="#ffffff" />
            </svg>
          </button>
          <button type="button" aria-label="Ma position" className="absolute right-12 top-[46px] flex size-[152px] items-center justify-center rounded-md bg-white/70 shadow-[0_1px_5px_rgba(0,0,0,0.3)]">
            <svg viewBox="0 0 84 84" className="size-[84px]" fill="none" stroke="#666666" aria-hidden="true">
              <circle cx="42" cy="42" r="29" strokeWidth="6" />
              <circle cx="42" cy="42" r="16" fill="#666666" stroke="none" />
              <path d="M42 0V12M42 72V84M0 42H12M72 42H84" strokeWidth="4" />
            </svg>
          </button>
        </section>

        <section className="bg-[#f05050] pb-10 pt-[60px]">
          <div className="grid grid-cols-3 gap-20 px-2.5">
            <button type="button" className={`${CARD} h-40`}>Avocat</button>
            <button type="button" className={`${CARD} h-40`}>Assurance</button>
            <button type="button" className={`${CARD} h-40`}>Banque</button>
          </div>
          <div className="mt-[100px] grid grid-cols-[436fr_460fr_380fr] gap-20 px-0.5">
            <button type="button" className={`${CARD} h-[280px]`}>
              {"Expert\u00a0"}
              <br />
              Comptable
            </button>
            <button type="button" className={`${CARD} h-[280px]`}>Communication</button>
            <button type="button" className={`${CARD} h-[280px]`}>Notaire</button>
          </div>
        </section>
      </main>

      <nav className="grid h-[232px] grid-cols-5 border-t-8 border-[#e4e4e4] bg-white text-[#757575] shadow-[0_-2px_12px_rgba(0,0,0,0.15)]">
        <button type="button" aria-current="page" className="flex flex-col items-center pt-4 text-[#f05050]">
          <MdHome className="size-[106px]" />
          <span className="mt-2 text-[56px] leading-[64px]">Accueil</span>
        </button>
        {NAV.map(({ label, icon: Icon }) => (
          <button key={label} type="button" className="flex flex-col items-center pt-[41px]">
            <Icon className="size-[86px]" />
            <span className="mt-3 text-[48px] leading-[56px]">{label}</span>
          </button>
        ))}
      </nav>
    </div>
  );
}
